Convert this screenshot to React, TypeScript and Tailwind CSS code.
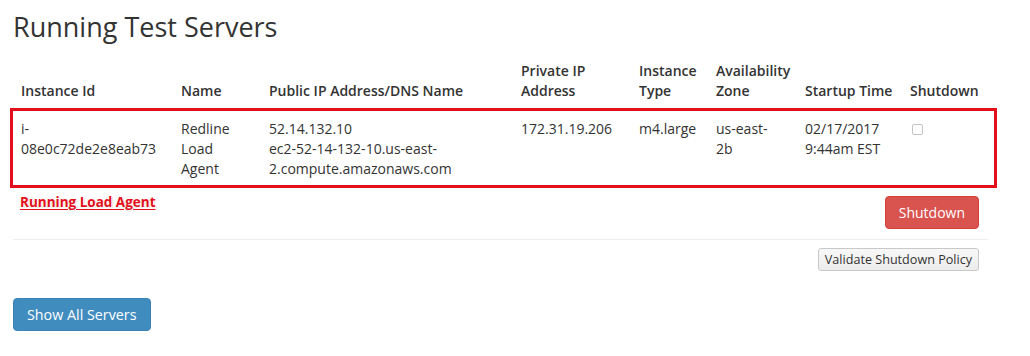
import React from 'react';

const font = { fontFamily: '"Open Sans", "Liberation Sans", sans-serif' };

const columns = [
  { label: 'Instance Id', w: 'w-[160px]' },
  { label: 'Name', w: 'w-[88px]' },
  { label: 'Public IP Address/DNS Name', w: 'w-[252px]' },
  { label: 'Private IP Address', w: 'w-[118px]' },
  { label: 'Instance Type', w: 'w-[77px]' },
  { label: 'Availability Zone', w: 'w-[89px]' },
  { label: 'Startup Time', w: 'w-[105px]' },
  { label: 'Shutdown', w: 'w-[86px]' },
];

const App: React.FC = () => {
  return (
    <div className="min-h-[356px] bg-white text-[#333] pl-[13px] pr-[42px] pt-[10px]" style={font}>
      <h1 className="text-[27px] leading-[34px] font-normal mb-[9px]">Running Test Servers</h1>

      <div className="relative">
        <table className="table-fixed border-collapse w-[975px] text-[14px] leading-[20px]">
          <thead>
            <tr>
              {columns.map((c) => (
                <th
                  key={c.label}
                  className={`${c.w} p-2 text-left align-bottom font-semibold border-b-2 border-[#ddd]`}
                >
                  {c.label}
                </th>
              ))}
            </tr>
          </thead>
          <tbody>
            <tr className="align-top">
              <td className="p-2">
                i-
                <br />
                08e0c72de2e8eab73
              </td>
              <td className="p-2">Redline Load Agent</td>
              <td className="p-2">
                52.14.132.10
                <br />
                ec2-52-14-132-10.us-east-
                <br />
                2.compute.amazonaws.com
              </td>
              <td className="p-2">172.31.19.206</td>
              <td className="p-2">m4.large</td>
              <td className="p-2">
                us-east-
                <br />
                2b
              </td>
              <td className="p-2">02/17/2017 9:44am EST</td>
              <td className="p-2">
                <span className="block w-[11px] h-[11px] mt-[5px] ml-[2px] border border-[#c4c4c4] rounded-[2px] bg-white" />
              </td>
            </tr>
          </tbody>
        </table>
        {/* annotation box */}
        <div className="absolute left-[-3px] top-[55px] w-[987px] h-[80px] border-[3px] border-[#e3101b] pointer-events-none" />
      </div>

      <div className="w-[966px] flex justify-between items-start mt-[9px]">
        <span
          className="ml-[7px] -mt-[4px] text-[13.5px] font-bold text-[#e3101b] underline underline-offset-2"
          style={{ textShadow: '1px 1px 0 #fff, 1px 1px 1px #999' }}
        >
          Running Load Agent
        </span>
        <button className="h-[33px] px-[13px] rounded bg-[#d9534f] border border-[#d43f3a] text-white text-[14px] leading-[20px]">
          Shutdown
        </button>
      </div>

      <div className="w-[975px] border-t border-[#eee] mt-[10px]" />

      <div className="w-[966px] flex justify-end mt-[8px]">
        <button className="h-[23px] px-[6px] rounded-[3px] border border-[#c8c8c8] bg-gradient-to-b from-[#f8f8f8] to-[#ececec] text-[12.6px] leading-[18px] text-[#333]">
          Validate Shutdown Policy
        </button>
      </div>

      <button className="mt-[27px] h-[33px] px-[13px] rounded bg-[#418cbf] border border-[#3b83b5] text-white text-[14.3px] leading-[20px]">
        Show All Servers
      </button>
    </div>
  );
};

export default App;
